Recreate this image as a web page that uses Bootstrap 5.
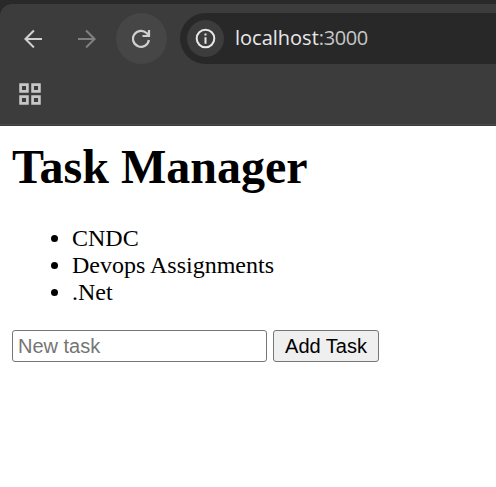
<!DOCTYPE html>
<html lang="en">
<head>
<meta charset="utf-8">
<title>Task Manager</title>
<link href="https://cdn.jsdelivr.net/npm/bootstrap@5.3.0/dist/css/bootstrap.min.css" rel="stylesheet">
<style>
body{background:#fff;color:#000;height:487px}
.chrome{background:#292929;height:126px;padding-top:4px}
.toolbar{background:#3c3c3c;height:122px;border-top-left-radius:12px;box-shadow:inset 0 -1px #3c3c3c,inset 0 -2px #4a4a4a}
.nav-row{height:51px;margin-top:9px}
.tool{width:51px;height:51px}
.tool-back{margin-left:8px}
.tool-next{margin-left:2px}
.tool-reload{margin-left:4px;background:#464646}
.address{margin-left:13px;height:51px;background:#282828;border-radius:26px 0 0 26px;padding-left:7px}
.site-info{width:37px;height:37px;background:#3c3c3c}
.url{font:20px/28px "Open Sans","Noto Sans",sans-serif;color:#e8e8e8;margin-left:11px;padding-bottom:2px;white-space:nowrap}
.port{color:#c7c7c7;letter-spacing:-.4px}
.bookmarks{padding:19px 0 0 19px}
svg{display:block}
main{padding:13px 12px 0}
h1{font:bold 48px/55px "Liberation Serif",serif;margin:0 0 31px}
ul{font:24px/27px "Liberation Serif",serif;margin:0 0 24px;padding-left:60px}
.task-input,.task-btn{height:32px;font:20px/24px "Liberation Sans",sans-serif;border:1px solid #767676;border-radius:3px}
.task-input{width:255px;padding:0 5px;color:#000}
.task-input::placeholder{color:#757575;opacity:1}
.task-btn{width:106px;margin-left:6px;padding:0;background:#efefef;color:#000}
</style>
<script src="https://cdn.jsdelivr.net/npm/bootstrap@5.3.0/dist/js/bootstrap.bundle.min.js"></script>
</head>
<body class="overflow-hidden">
<header class="chrome">
 <div class="toolbar d-flex flex-column">
  <div class="nav-row d-flex align-items-center flex-shrink-0">
   <div class="tool tool-back d-flex align-items-center justify-content-center"><svg width="19" height="19" viewBox="0 0 19 19" fill="none" stroke="#d0d0d0" stroke-width="2.1"><path d="M18 10H1.8M9.9 1.6L1.5 10L9.9 18.4"/></svg></div>
   <div class="tool tool-next d-flex align-items-center justify-content-center"><svg width="19" height="19" viewBox="0 0 19 19" fill="none" stroke="#808080" stroke-width="2.1"><path d="M1 10H17.2M9.1 1.6L17.5 10L9.1 18.4"/></svg></div>
   <div class="tool tool-reload rounded-circle d-flex align-items-center justify-content-center"><svg width="19" height="19" viewBox="0 0 19 19" fill="none" stroke="#d0d0d0" stroke-width="2.2"><path d="M16.9 11A8 8 0 1 1 14.8 4.3L17 6.7M17 1V7H10.5"/></svg></div>
   <div class="address d-flex align-items-center flex-grow-1">
    <span class="site-info rounded-circle d-flex align-items-center justify-content-center flex-shrink-0"><svg width="21" height="21" viewBox="0 0 21 21" fill="none" stroke="#e8e8e8" stroke-width="2"><circle cx="10.5" cy="10.5" r="8.8"/><path d="M10.5 9.2V15.7M10.5 5.6V7.6"/></svg></span>
    <span class="url"><span>localhost</span><span class="port">:3000</span></span>
   </div>
  </div>
  <div class="bookmarks"><svg width="22" height="22" viewBox="0 0 22 22" fill="none" stroke="#c7c7c7" stroke-width="2.7"><path d="M1.6 1.6H8.4V8.4H1.6ZM13.6 1.6H20.4V8.4H13.6ZM1.6 13.6H8.4V20.4H1.6ZM13.6 13.6H20.4V20.4H13.6Z"/></svg></div>
 </div>
</header>
<main>
 <h1>Task Manager</h1>
 <ul><li>CNDC</li><li>Devops Assignments</li><li>.Net</li></ul>
 <form class="d-flex"><input class="task-input" type="text" placeholder="New task" aria-label="New task"><button class="task-btn" type="button">Add Task</button></form>
</main>
</body>
</html>
